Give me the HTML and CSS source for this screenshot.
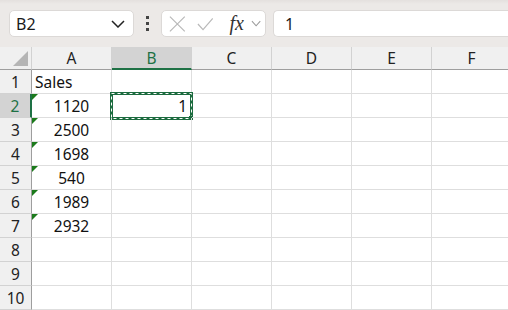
FILE: index.html
```html
<!DOCTYPE html>
<html lang="en">
<head>
  <meta charset="UTF-8">
  <title>Sheet</title>
  <link rel="stylesheet" href="styles.css">
</head>
<body>

  <!-- formula bar -->
  <div class="topbar">
    <div class="namebox">
      <span>B2</span>
      <svg width="14" height="8" viewBox="0 0 14 8"><path d="M1 1 L7 7 L13 1" fill="none" stroke="#222" stroke-width="1.5"/></svg>
    </div>
    <div class="dots"><i></i><i></i><i></i></div>
    <div class="fbtns">
      <svg width="18" height="18" viewBox="0 0 18 18"><path d="M1 1 L17 17 M17 1 L1 17" stroke="#b9b9b9" stroke-width="1.3"/></svg>
      <svg width="18" height="14" viewBox="0 0 18 14"><path d="M1 7 L6.5 13 L17 1" fill="none" stroke="#b9b9b9" stroke-width="1.3"/></svg>
      <span class="fx">fx</span>
      <svg width="11" height="7" viewBox="0 0 11 7"><path d="M1 1 L5.5 6 L10 1" fill="none" stroke="#999" stroke-width="1.1"/></svg>
    </div>
    <div class="formula">1</div>
  </div>

  <!-- grid -->
  <div class="sheet">
    <div class="corner"><div class="tri"></div></div>
    <div class="colhead">A</div>
    <div class="colhead sel">B</div>
    <div class="colhead">C</div>
    <div class="colhead">D</div>
    <div class="colhead">E</div>
    <div class="colhead">F</div>

    <div class="rowhead">1</div>
    <div class="cell left">Sales</div><div class="cell"></div><div class="cell"></div><div class="cell"></div><div class="cell"></div><div class="cell"></div>

    <div class="rowhead sel">2</div>
    <div class="cell num flag">1120</div>
    <div class="cell right active">1
      <svg class="ants" width="83" height="28" viewBox="0 0 83 28">
        <rect x="1.5" y="1.5" width="80" height="25" fill="none" stroke="#1c6b3f" stroke-width="3"/>
        <rect x="1.5" y="1.5" width="80" height="25" fill="none" stroke="#fff" stroke-width="1" stroke-dasharray="3 3"/>
        <rect x="79" y="24" width="4" height="4" fill="#1c6b3f"/>
      </svg>
    </div>
    <div class="cell"></div><div class="cell"></div><div class="cell"></div><div class="cell"></div>

    <div class="rowhead">3</div>
    <div class="cell num flag">2500</div><div class="cell"></div><div class="cell"></div><div class="cell"></div><div class="cell"></div><div class="cell"></div>

    <div class="rowhead">4</div>
    <div class="cell num flag">1698</div><div class="cell"></div><div class="cell"></div><div class="cell"></div><div class="cell"></div><div class="cell"></div>

    <div class="rowhead">5</div>
    <div class="cell num flag">540</div><div class="cell"></div><div class="cell"></div><div class="cell"></div><div class="cell"></div><div class="cell"></div>

    <div class="rowhead">6</div>
    <div class="cell num flag">1989</div><div class="cell"></div><div class="cell"></div><div class="cell"></div><div class="cell"></div><div class="cell"></div>

    <div class="rowhead">7</div>
    <div class="cell num flag">2932</div><div class="cell"></div><div class="cell"></div><div class="cell"></div><div class="cell"></div><div class="cell"></div>

    <div class="rowhead">8</div>
    <div class="cell"></div><div class="cell"></div><div class="cell"></div><div class="cell"></div><div class="cell"></div><div class="cell"></div>

    <div class="rowhead">9</div>
    <div class="cell"></div><div class="cell"></div><div class="cell"></div><div class="cell"></div><div class="cell"></div><div class="cell"></div>

    <div class="rowhead">10</div>
    <div class="cell"></div><div class="cell"></div><div class="cell"></div><div class="cell"></div><div class="cell"></div><div class="cell"></div>
  </div>

</body>
</html>
```

FILE: styles.css
```css
body {
  margin: 0;
  width: 508px;
  height: 310px;
  overflow: hidden;
  background: #fff;
  font-family: "Noto Sans", sans-serif;
  color: #1a1a1a;
}

.topbar {
  height: 47px;
  box-sizing: border-box;
  padding: 10px 0 10px 9px;
  display: flex;
  align-items: stretch;
  background: linear-gradient(#e4e0de 0, #ece9e7 4px, #ece9e7 100%);
}

.namebox {
  width: 125px;
  box-sizing: border-box;
  background: #fff;
  border: 1px solid #dcd9d7;
  border-radius: 5px;
  display: flex;
  align-items: center;
  justify-content: space-between;
  padding: 0 8px 0 6px;
  font-size: 16px;
}

.dots {
  width: 27px;
  display: flex;
  flex-direction: column;
  align-items: center;
  justify-content: center;
  gap: 3px;
}

.dots i {
  width: 3px;
  height: 3px;
  background: #444;
}

.fbtns {
  width: 105px;
  box-sizing: border-box;
  background: #fff;
  border: 1px solid #dcd9d7;
  border-radius: 5px;
  display: flex;
  align-items: center;
  padding: 0 4px 0 7px;
  gap: 11px;
}

.fbtns .fx {
  font-family: "Liberation Serif", serif;
  font-style: italic;
  font-size: 20px;
  color: #333;
  margin-left: 5px;
  margin-right: -4px;
}

.formula {
  flex: 1;
  margin-left: 7px;
  background: #fff;
  border: 1px solid #dcd9d7;
  border-right: none;
  border-radius: 5px 0 0 5px;
  display: flex;
  align-items: center;
  padding-left: 11px;
  font-size: 16px;
}

.sheet {
  display: grid;
  grid-template-columns: 32px repeat(6, 80px);
  grid-template-rows: 23px repeat(10, 24px);
  font-size: 15.5px;
}

.sheet > div {
  box-sizing: border-box;
  display: flex;
  align-items: center;
}

.corner {
  background: #f0f0f0;
  border-right: 1px solid #d2d2d2;
  border-bottom: 1px solid #9e9e9e;
  position: relative;
}

.tri {
  position: absolute;
  right: 3px;
  bottom: 3px;
  width: 0;
  height: 0;
  border-left: 15px solid transparent;
  border-bottom: 15px solid #b5b5b5;
}

.colhead {
  background: #f0f0f0;
  border-right: 1px solid #d2d2d2;
  border-bottom: 1px solid #9e9e9e;
  justify-content: center;
  color: #222;
}

.colhead.sel {
  background: #d3d3d3;
  border-bottom: 2px solid #1e7145;
  color: #1e7145;
}

.rowhead {
  background: #f0f0f0;
  border-right: 1px solid #9e9e9e;
  border-bottom: 1px solid #d2d2d2;
  justify-content: center;
  color: #222;
}

.rowhead.sel {
  background: #d3d3d3;
  border-right: 2px solid #1e7145;
  color: #1e7145;
}

.cell {
  border-right: 1px solid #dedede;
  border-bottom: 1px solid #dedede;
  position: relative;
  color: #111;
}

.cell.left { padding-left: 3px; }
.cell.num { justify-content: center; }
.cell.right { justify-content: flex-end; padding-right: 4px; }

.flag::before {
  content: "";
  position: absolute;
  left: 0;
  top: 0;
  border-top: 6px solid #1b7a1b;
  border-right: 6px solid transparent;
}

/* selection with marching ants */
.ants {
  position: absolute;
  left: -2px;
  top: -2px;
}
```
